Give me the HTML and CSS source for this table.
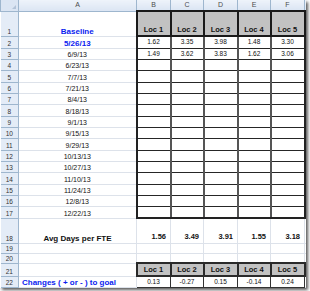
FILE: index.html
```html
<!DOCTYPE html>
<html>
<head>
<meta charset="utf-8">
<link rel="stylesheet" href="styles.css">
</head>
<body>
<div class="sheet">
<table class="grid">
  <colgroup>
    <col class="c-rn"><col class="c-a"><col class="c-loc"><col class="c-loc2"><col class="c-loc"><col class="c-loc2"><col class="c-loc"><col class="c-g">
  </colgroup>
  <tr class="hdr">
    <th class="corner"><span class="tri"></span></th><th>A</th><th>B</th><th>C</th><th>D</th><th>E</th><th>F</th><th class="g"></th>
  </tr>
  <tr class="r1">
    <th class="rn">1</th><td class="a blue bold">Baseline</td>
    <td class="lochd first">Loc 1</td><td class="lochd">Loc 2</td><td class="lochd">Loc 3</td><td class="lochd">Loc 4</td><td class="lochd last">Loc 5</td><td class="g"></td>
  </tr>
  <tr class="h12"><th class="rn">2</th><td class="a blue bold">5/26/13</td><td class="v first">1.62</td><td class="v">3.35</td><td class="v">3.98</td><td class="v">1.48</td><td class="v last">3.30</td><td class="g"></td></tr>
  <tr class="h11"><th class="rn">3</th><td class="a">6/9/13</td><td class="v first">1.49</td><td class="v">3.62</td><td class="v">3.83</td><td class="v">1.62</td><td class="v last">3.06</td><td class="g"></td></tr>
  <tr class="h11"><th class="rn">4</th><td class="a">6/23/13</td><td class="v first"></td><td class="v"></td><td class="v"></td><td class="v"></td><td class="v last"></td><td class="g"></td></tr>
  <tr class="h12"><th class="rn">5</th><td class="a">7/7/13</td><td class="v first"></td><td class="v"></td><td class="v"></td><td class="v"></td><td class="v last"></td><td class="g"></td></tr>
  <tr class="h11"><th class="rn">6</th><td class="a">7/21/13</td><td class="v first"></td><td class="v"></td><td class="v"></td><td class="v"></td><td class="v last"></td><td class="g"></td></tr>
  <tr class="h11"><th class="rn">7</th><td class="a">8/4/13</td><td class="v first"></td><td class="v"></td><td class="v"></td><td class="v"></td><td class="v last"></td><td class="g"></td></tr>
  <tr class="h12"><th class="rn">8</th><td class="a">8/18/13</td><td class="v first"></td><td class="v"></td><td class="v"></td><td class="v"></td><td class="v last"></td><td class="g"></td></tr>
  <tr class="h11"><th class="rn">9</th><td class="a">9/1/13</td><td class="v first"></td><td class="v"></td><td class="v"></td><td class="v"></td><td class="v last"></td><td class="g"></td></tr>
  <tr class="h11"><th class="rn">10</th><td class="a">9/15/13</td><td class="v first"></td><td class="v"></td><td class="v"></td><td class="v"></td><td class="v last"></td><td class="g"></td></tr>
  <tr class="h12"><th class="rn">11</th><td class="a">9/29/13</td><td class="v first"></td><td class="v"></td><td class="v"></td><td class="v"></td><td class="v last"></td><td class="g"></td></tr>
  <tr class="h11"><th class="rn">12</th><td class="a">10/13/13</td><td class="v first"></td><td class="v"></td><td class="v"></td><td class="v"></td><td class="v last"></td><td class="g"></td></tr>
  <tr class="h11"><th class="rn">13</th><td class="a">10/27/13</td><td class="v first"></td><td class="v"></td><td class="v"></td><td class="v"></td><td class="v last"></td><td class="g"></td></tr>
  <tr class="h12"><th class="rn">14</th><td class="a">11/10/13</td><td class="v first"></td><td class="v"></td><td class="v"></td><td class="v"></td><td class="v last"></td><td class="g"></td></tr>
  <tr class="h11"><th class="rn">15</th><td class="a">11/24/13</td><td class="v first"></td><td class="v"></td><td class="v"></td><td class="v"></td><td class="v last"></td><td class="g"></td></tr>
  <tr class="h11"><th class="rn">16</th><td class="a">12/8/13</td><td class="v first"></td><td class="v"></td><td class="v"></td><td class="v"></td><td class="v last"></td><td class="g"></td></tr>
  <tr class="h12 endblk"><th class="rn">17</th><td class="a">12/22/13</td><td class="v first"></td><td class="v"></td><td class="v"></td><td class="v"></td><td class="v last"></td><td class="g"></td></tr>
  <tr class="r18"><th class="rn">18</th><td class="a bold">Avg Days per FTE</td><td class="avg">1.56</td><td class="avg">3.49</td><td class="avg">3.91</td><td class="avg">1.55</td><td class="avg">3.18</td><td class="g"></td></tr>
  <tr class="h10"><th class="rn">19</th><td class="a"></td><td class="p"></td><td class="p"></td><td class="p"></td><td class="p"></td><td class="p"></td><td class="g"></td></tr>
  <tr class="h10"><th class="rn">20</th><td class="a"></td><td class="p"></td><td class="p"></td><td class="p"></td><td class="p"></td><td class="p"></td><td class="g"></td></tr>
  <tr class="r21"><th class="rn">21</th><td class="a"></td><td class="lochd2">Loc 1</td><td class="lochd2">Loc 2</td><td class="lochd2">Loc 3</td><td class="lochd2">Loc 4</td><td class="lochd2">Loc 5</td><td class="g gg"></td></tr>
  <tr class="r22"><th class="rn">22</th><td class="a blue bold left">Changes ( + or - ) to goal</td><td class="chg">0.13</td><td class="chg">-0.27</td><td class="chg">0.15</td><td class="chg">-0.14</td><td class="chg">0.24</td><td class="g"></td></tr>
</table>
</div>
</body>
</html>
```
FILE: styles.css
```css
html, body {
  margin: 0;
  padding: 0;
  background: #ffffff;
}
body {
  width: 310px;
  height: 291px;
  overflow: hidden;
  font-family: "Liberation Sans", Arial, sans-serif;
}
.sheet {
  width: 306px;
  box-shadow: 2px 2px 3px rgba(0,0,0,0.65);
  background: #fff;
  overflow: hidden;
}
.grid {
  border-collapse: collapse;
  table-layout: fixed;
  width: 306px;
}
.c-rn { width: 18px; }
.c-a { width: 118px; }
.c-loc { width: 34px; }
.c-loc2 { width: 33px; }
.c-g { width: 2px; }
td, th {
  padding: 0;
  font-size: 7px;
  line-height: 8px;
  overflow: hidden;
  white-space: nowrap;
  box-sizing: border-box;
}
.hdr th {
  height: 11px;
  background: linear-gradient(#eef3fa, #dbe5f3);
  color: #4c4c4c;
  font-weight: normal;
  border: 1px solid #9eb6ce;
  border-top: none;
  text-align: center;
  font-size: 7px;
}
.hdr th.corner {
  position: relative;
  background: #dbe5f3;
}
.tri {
  position: absolute;
  right: 2px;
  bottom: 2px;
  width: 0; height: 0;
  border-left: 4px solid transparent;
  border-bottom: 4px solid #b3c3d8;
}
.rn {
  background: #e4ecf7;
  color: #333;
  font-weight: normal;
  font-size: 6.5px;
  text-align: center;
  border: 1px solid #9eb6ce;
  border-left: none;
  vertical-align: bottom;
}
td.a {
  text-align: center;
  color: #111;
  border: 1px solid #dde2ea;
  vertical-align: bottom;
}
td.a.left { text-align: left; padding-left: 3px; }
.blue { color: #0a1cf0 !important; }
.bold { font-weight: bold; font-size: 8px !important; }
.r1 { height: 25px; }
.h12 { height: 12px; }
.h11 { height: 11px; }
.h10 { height: 10px; }
.r18 { height: 25px; }
.r21 { height: 13px; }
.r22 { height: 11px; }
td.lochd {
  background: #c2c2c2;
  border: 2px solid #1a1a1a;
  font-weight: bold;
  font-size: 7.5px;
  text-align: center;
  vertical-align: bottom;
  padding-bottom: 1px;
  color: #111;
}
td.v {
  border: 1px solid #262626;
  border-left: 2px solid #555;
  border-right: 2px solid #555;
  text-align: center;
  font-size: 6.5px;
  color: #111;
  vertical-align: middle;
}
td.v.first { border-left: 2px solid #222; }
td.v.last { border-right: 2px solid #222; }
.endblk td.v { border-bottom: 2px solid #222; }
td.avg {
  text-align: right;
  padding-right: 4px;
  font-weight: bold;
  font-size: 7.5px;
  border: 1px solid #dde2ea;
  vertical-align: bottom;
  padding-bottom: 2px;
  color: #111;
}
td.p { border: 1px solid #dde2ea; }
td.lochd2 {
  background: #c2c2c2;
  border: 2px solid #2a2a2a;
  font-weight: bold;
  font-size: 7.5px;
  text-align: center;
  color: #111;
}
td.chg {
  border: 1px solid #333;
  text-align: center;
  font-size: 6.5px;
  color: #111;
}
td.g { border: 1px solid #dde2ea; border-right: none; }
td.gg { background: #c2c2c2; }
```
